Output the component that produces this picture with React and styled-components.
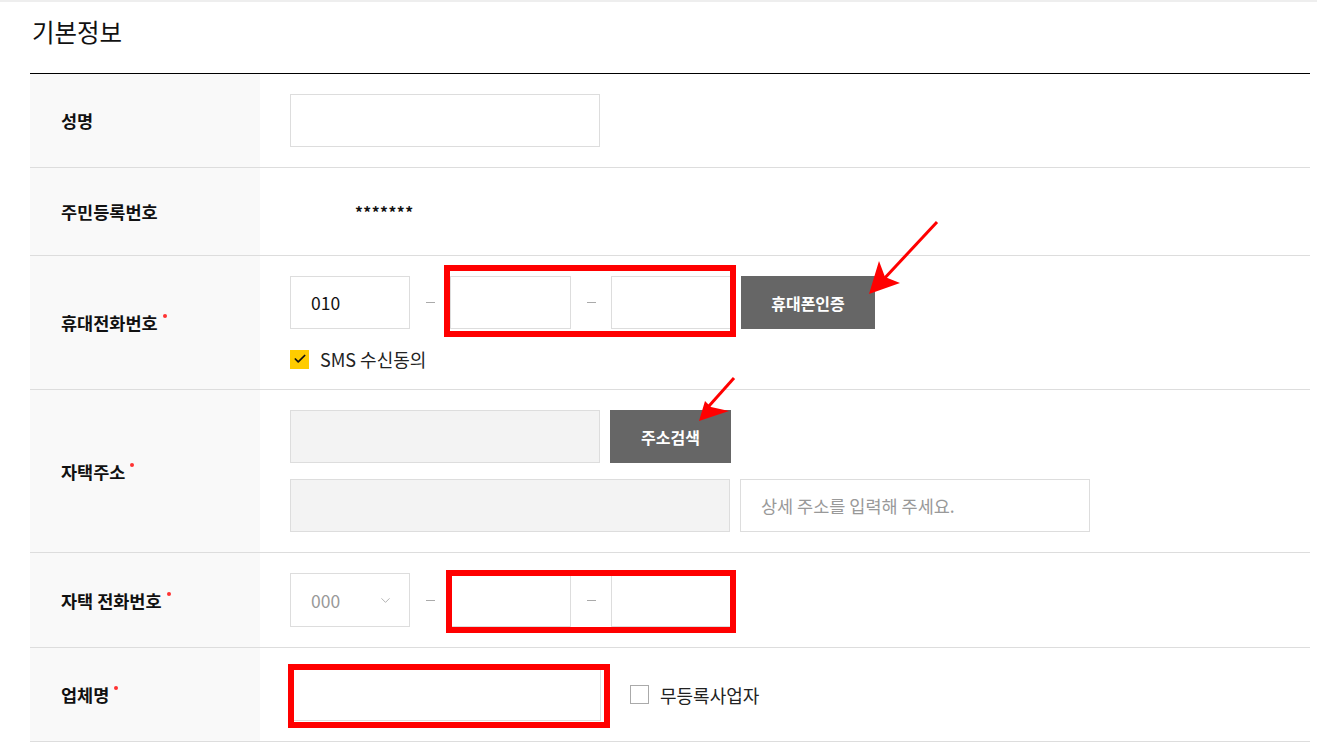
import React from "react";
import styled, { createGlobalStyle } from "styled-components";
import { Check, ChevronDown } from "lucide-react";

const GlobalStyle = createGlobalStyle`
  body {
    margin: 0;
    background: #fff;
    font-family: "Noto Sans CJK KR", "Noto Sans", sans-serif;
    color: #111;
  }
`;

const Page = styled.div`
  position: relative;
  border-top: 2px solid #eee;
  padding: 0 7px 0 30px;
  height: 745px;
  overflow: hidden;
`;

const Title = styled.h2`
  margin: 0;
  height: 71px;
  padding: 0 0 12px 2px;
  box-sizing: border-box;
  display: flex;
  align-items: center;
  font-size: 24.5px;
  font-weight: 400;
  color: #111;
`;

const Table = styled.div`
  border-top: 1px solid #000;
`;

const Row = styled.div`
  display: grid;
  grid-template-columns: 230px 1fr;
  border-bottom: 1px solid #ddd;
  min-height: ${(p) => p.$min || 0}px;
`;

const Label = styled.div`
  background: #f9f9f9;
  display: flex;
  align-items: center;
  padding-left: 31px;
  font-size: 17.5px;
  font-weight: 700;
  color: #111;
`;

const Required = styled.span`
  display: inline-block;
  width: 4px;
  height: 4px;
  border-radius: 50%;
  background: #f33;
  margin: -13px 0 0 5px;
`;

const Cell = styled.div`
  padding: 20px 30px;
  display: flex;
  flex-direction: column;
  justify-content: center;
  gap: ${(p) => p.$gap || 0}px;
`;

const Line = styled.div`
  display: flex;
  align-items: center;
`;

const Input = styled.input`
  box-sizing: border-box;
  width: ${(p) => p.$w}px;
  height: 53px;
  margin-left: ${(p) => p.$ml || 0}px;
  border: 1px solid #ddd;
  background: ${(p) => (p.disabled ? "#f3f3f3" : "#fff")};
  padding: 0 20px;
  font-family: inherit;
  font-size: 17.5px;
  color: #111;
  outline: none;
  &::placeholder {
    color: #999;
  }
`;

const Dash = styled.span`
  width: 40px;
  display: flex;
  justify-content: center;
  &::before {
    content: "";
    width: 9px;
    height: 1px;
    background: #aaa;
  }
`;

const DarkButton = styled.button`
  box-sizing: border-box;
  width: ${(p) => p.$w}px;
  height: 53px;
  margin-left: 10px;
  border: none;
  background: #666;
  color: #fff;
  font-family: inherit;
  font-size: 16px;
  font-weight: 700;
  cursor: pointer;
`;

const Masked = styled.span`
  margin-left: 65px;
  font-size: 15.5px;
  font-weight: 700;
  letter-spacing: 0.5px;
`;

const CheckRow = styled.label`
  display: flex;
  align-items: center;
  gap: 11px;
  height: 20px;
  line-height: 20px;
  margin-left: ${(p) => p.$ml || 0}px;
  font-size: 18px;
  color: #222;
`;

const Box = styled.span`
  box-sizing: border-box;
  width: 19px;
  height: 19px;
  display: flex;
  align-items: center;
  justify-content: center;
  background: ${(p) => (p.$on ? "#ffcc00" : "#fff")};
  border: 1px solid ${(p) => (p.$on ? "#ffcc00" : "#aaa")};
`;

const Select = styled.div`
  box-sizing: border-box;
  width: 120px;
  height: 54px;
  border: 1px solid #ddd;
  display: flex;
  align-items: center;
  justify-content: space-between;
  padding: 0 16px 0 20px;
  font-size: 17.5px;
  color: #999;
`;

const Marked = styled.span`
  position: relative;
  display: flex;
  align-items: center;
  &::after {
    content: "";
    position: absolute;
    inset: ${(p) => p.$inset};
    border: 6px solid #ff0000;
    pointer-events: none;
  }
`;

const Arrows = styled.svg`
  position: absolute;
  left: 0;
  top: -2px;
  width: 1317px;
  height: 747px;
  pointer-events: none;
`;

export default function App() {
  return (
    <>
      <GlobalStyle />
      <Page>
        <Title>기본정보</Title>
        <Table>
          <Row>
            <Label>성명</Label>
            <Cell>
              <Line>
                <Input $w={310} defaultValue="" />
              </Line>
            </Cell>
          </Row>
          <Row $min={87}>
            <Label>주민등록번호</Label>
            <Cell>
              <Line>
                <Masked>*******</Masked>
              </Line>
            </Cell>
          </Row>
          <Row>
            <Label>
              휴대전화번호<Required />
            </Label>
            <Cell $gap={20}>
              <Line>
                <Input $w={120} defaultValue="010" />
                <Dash />
                <Marked $inset="-11px -5px -8px -6px">
                  <Input $w={121} />
                  <Dash />
                  <Input $w={120} />
                </Marked>
                <DarkButton $w={134}>휴대폰인증</DarkButton>
              </Line>
              <CheckRow>
                <Box $on>
                  <Check size={14} strokeWidth={3} color="#111" />
                </Box>
                SMS 수신동의
              </CheckRow>
            </Cell>
          </Row>
          <Row>
            <Label>
              자택주소<Required />
            </Label>
            <Cell $gap={16}>
              <Line>
                <Input $w={310} disabled />
                <DarkButton $w={121}>주소검색</DarkButton>
              </Line>
              <Line>
                <Input $w={440} disabled />
                <Input $w={350} $ml={10} placeholder="상세 주소를 입력해 주세요." />
              </Line>
            </Cell>
          </Row>
          <Row>
            <Label>
              자택 전화번호<Required />
            </Label>
            <Cell>
              <Line>
                <Select>
                  000
                  <ChevronDown size={15} strokeWidth={1.2} color="#999" />
                </Select>
                <Dash />
                <Marked $inset="-4px -5px -6px -4px">
                  <Input $w={121} />
                  <Dash />
                  <Input $w={120} />
                </Marked>
              </Line>
            </Cell>
          </Row>
          <Row>
            <Label>
              업체명<Required />
            </Label>
            <Cell>
              <Line>
                <Marked $inset="-4px -9px -7px -2px">
                  <Input $w={311} />
                </Marked>
                <CheckRow $ml={29}>
                  <Box />
                  무등록사업자
                </CheckRow>
              </Line>
            </Cell>
          </Row>
        </Table>
        <Arrows viewBox="0 0 1317 747">
          <line x1="937" y1="222" x2="882" y2="281" stroke="#ff0000" strokeWidth="3" />
          <polygon points="869,294 879,261 885,277 900,283" fill="#ff0000" />
          <line x1="734" y1="378" x2="709" y2="406" stroke="#ff0000" strokeWidth="3" />
          <polygon points="699,421 705,401 711,407 729,411" fill="#ff0000" />
        </Arrows>
      </Page>
    </>
  );
}
